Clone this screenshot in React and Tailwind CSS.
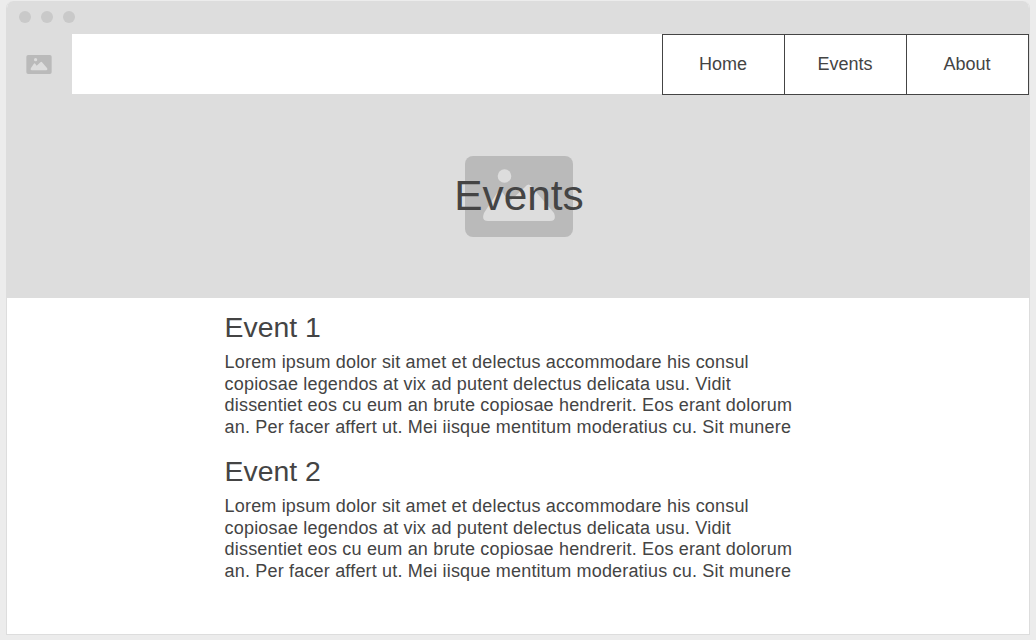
const LINES = [
  "Lorem ipsum dolor sit amet et delectus accommodare his consul",
  "copiosae legendos at vix ad putent delectus delicata usu. Vidit",
  "dissentiet eos cu eum an brute copiosae hendrerit. Eos erant dolorum",
  "an. Per facer affert ut. Mei iisque mentitum moderatius cu. Sit munere",
];

function Picture({ className }) {
  return (
    <svg viewBox="0 0 108 81" className={className} aria-hidden="true">
      <rect width="108" height="81" rx="8" fill="#bababa" />
      <circle cx="39.5" cy="20" r="6.8" fill="#dddddd" />
      <path
        d="M19 57 L32 37 Q35 33 38 37 L44 46 L60 31 Q63.5 26 67 31 L89 57 Q92 65 85 65 H23 Q16 65 19 57 Z"
        fill="#dddddd"
      />
    </svg>
  );
}

function Event({ title }) {
  return (
    <article className="h-36">
      <h2 className="h-[42px] text-[28.4px] leading-[34px]">{title}</h2>
      <p className="text-[18px] leading-[21.67px] tracking-[0.18px] whitespace-nowrap">
        {LINES.map((line) => (
          <span key={line} className="block">{line}</span>
        ))}
      </p>
    </article>
  );
}

export default function App() {
  return (
    <div className="h-[640px] w-[1036px] overflow-hidden bg-[#ececec] pt-px pl-1.5 font-['Liberation_Sans',Arial,sans-serif] text-[#444444]">
      <div className="flex h-[634px] w-[1024px] flex-col overflow-hidden rounded-t-[7px] border border-t-0 border-[#dddddd] bg-white">
        <div className="flex h-[33px] shrink-0 gap-2.5 bg-[#dddddd] pt-[10px] pl-3">
          <i className="size-3 rounded-full bg-[#c9c9c9]" />
          <i className="size-3 rounded-full bg-[#c9c9c9]" />
          <i className="size-3 rounded-full bg-[#c9c9c9]" />
        </div>
        <header className="flex h-[60px] shrink-0">
          <div className="flex w-[65px] items-center justify-center bg-[#dddddd] pt-px pr-px">
            <Picture className="h-[19px] w-[26px]" />
          </div>
          <div className="w-[590px]" />
          <nav className="z-10 flex h-[61px] w-[367px] divide-x divide-[#444444] border border-[#444444] bg-white text-[18px]">
            {["Home", "Events", "About"].map((label) => (
              <a key={label} className="flex flex-1 items-center justify-center pr-px">{label}</a>
            ))}
          </nav>
        </header>
        <section className="grid h-[204px] shrink-0 place-items-center bg-[#dddddd] pl-0.5">
          <Picture className="col-start-1 row-start-1 h-[81px] w-[108px]" />
          <h1 className="z-10 col-start-1 row-start-1 text-[42.4px] leading-none">Events</h1>
        </section>
        <main className="pt-3 pl-[217.6px]">
          <Event title="Event 1" />
          <Event title="Event 2" />
        </main>
      </div>
    </div>
  );
}
